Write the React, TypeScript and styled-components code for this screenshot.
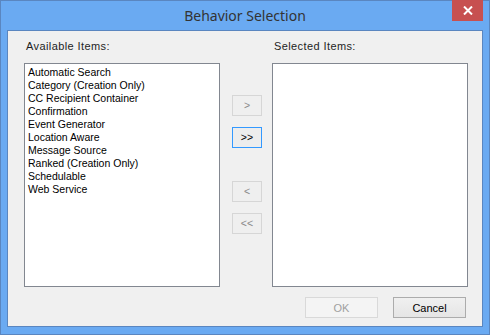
import styled, { createGlobalStyle } from "styled-components";

const GlobalStyle = createGlobalStyle`
  html, body {
    margin: 0;
    padding: 0;
    background: #ffffff;
  }
  * {
    box-sizing: border-box;
  }
`;

const Window = styled.div`
  width: 490px;
  height: 335px;
  display: flex;
  flex-direction: column;
  background-color: #6aaaf2;
  border: 1px solid #5a86c0;
  padding: 0 6px 7px 6px;
`;

const TitleBar = styled.div`
  height: 29px;
  display: grid;
  grid-template-columns: 1fr auto 1fr;
  align-items: start;
`;

const Title = styled.div`
  grid-column: 2;
  padding-top: 6px;
  font-family: "Noto Sans", "Liberation Sans", sans-serif;
  font-size: 14px;
  line-height: 18px;
  color: #333333;
  white-space: nowrap;
`;

const CloseButton = styled.div`
  grid-column: 3;
  justify-self: end;
  width: 31px;
  height: 21px;
  margin-top: -1px;
  background-color: #c75050;
  display: flex;
  align-items: center;
  justify-content: center;
`;

const Client = styled.div`
  flex: 1;
  display: flex;
  flex-direction: column;
  background-color: #f0f0f0;
  border: 1px solid #5a86c0;
  padding: 9px 14px 8px 16px;
  font-family: "Liberation Sans", Arial, sans-serif;
  font-size: 10.5px;
  color: #000000;
`;

const Columns = styled.div`
  display: grid;
  grid-template-columns: 196px 1fr 196px;
`;

const Label = styled.div`
  height: 13px;
  line-height: 13px;
  padding-left: 2px;
  margin-bottom: 10px;
  font-size: 11px;
  letter-spacing: 0.4px;
  color: #1e1e1e;
  white-space: nowrap;
`;

const ListBox = styled.div`
  height: 224px;
  background-color: #ffffff;
  border: 1px solid #828790;
  padding: 2px 3px;
`;

const ListItem = styled.div`
  height: 13px;
  line-height: 13px;
  white-space: nowrap;
`;

const MoveColumn = styled.div`
  display: flex;
  flex-direction: column;
  padding: 32px 0 0 12px;
`;

const MoveButton = styled.div<{ $focused?: boolean; $gap: number }>`
  width: 30px;
  height: 21px;
  margin-top: ${(p) => p.$gap}px;
  display: flex;
  align-items: center;
  justify-content: center;
  line-height: 13px;
  border: 1px solid ${(p) => (p.$focused ? "#3399ff" : "#d6d6d6")};
  background-color: ${(p) => (p.$focused ? "#ededed" : "#efefef")};
  color: ${(p) => (p.$focused ? "#000000" : "#8a8a8a")};
`;

const Footer = styled.div`
  display: flex;
  justify-content: flex-end;
  gap: 15px;
  margin-top: 10px;
  margin-right: 2px;
`;

const DialogButton = styled.div<{ $disabled?: boolean }>`
  width: 73px;
  height: 21px;
  display: flex;
  align-items: center;
  justify-content: center;
  border: 1px solid ${(p) => (p.$disabled ? "#d9d9d9" : "#acacac")};
  background: ${(p) =>
    p.$disabled ? "#f4f4f4" : "linear-gradient(#f0f0f0, #e5e5e5)"};
  color: ${(p) => (p.$disabled ? "#a0a0a0" : "#000000")};
  font-size: 11px;
`;

const items = [
  "Automatic Search",
  "Category (Creation Only)",
  "CC Recipient Container",
  "Confirmation",
  "Event Generator",
  "Location Aware",
  "Message Source",
  "Ranked (Creation Only)",
  "Schedulable",
  "Web Service",
];

export default function App() {
  return (
    <>
      <GlobalStyle />
      <Window>
        <TitleBar>
          <Title>Behavior Selection</Title>
          <CloseButton>
            <svg width="10" height="9" viewBox="0 0 10 9">
              <path
                d="M1 0.5 L9 8.5 M9 0.5 L1 8.5"
                stroke="#ffffff"
                strokeWidth="2"
              />
            </svg>
          </CloseButton>
        </TitleBar>
        <Client>
          <Columns>
            <Label>Available Items:</Label>
            <div />
            <Label>Selected Items:</Label>
            <ListBox>
              {items.map((it) => (
                <ListItem key={it}>{it}</ListItem>
              ))}
            </ListBox>
            <MoveColumn>
              <MoveButton $gap={0}>&gt;</MoveButton>
              <MoveButton $gap={11} $focused>
                &gt;&gt;
              </MoveButton>
              <MoveButton $gap={33}>&lt;</MoveButton>
              <MoveButton $gap={11}>&lt;&lt;</MoveButton>
            </MoveColumn>
            <ListBox />
          </Columns>
          <Footer>
            <DialogButton $disabled>OK</DialogButton>
            <DialogButton>Cancel</DialogButton>
          </Footer>
        </Client>
      </Window>
    </>
  );
}
